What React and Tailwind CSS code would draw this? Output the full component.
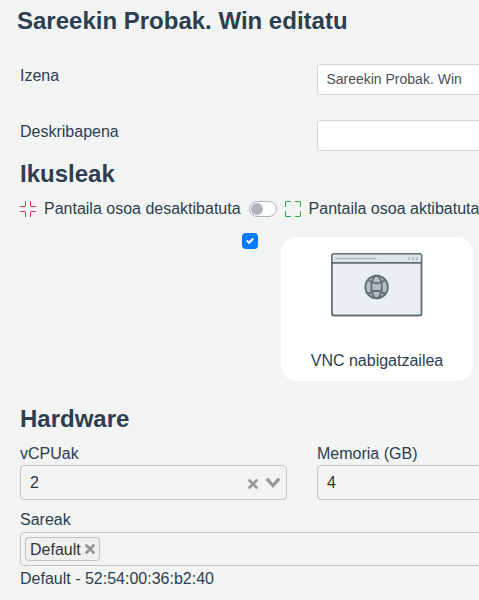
import { BsFullscreen, BsFullscreenExit } from "react-icons/bs";

function ClearIcon() {
  return (
    <svg width="10" height="10" viewBox="0 0 10 10" className="shrink-0 fill-[#3c3c3c]/50">
      <path d="M6.895455 5l2.842897-2.842898c.348864-.348863.348864-.914488 0-1.263636L9.106534.261648c-.348864-.348864-.914489-.348864-1.263636 0L5 3.104545 2.157102.261648c-.348863-.348864-.914488-.348864-1.263636 0L.261648.893466c-.348864.348864-.348864.914489 0 1.263636L3.104545 5 .261648 7.842898c-.348864.348863-.348864.914488 0 1.263636l.631818.631818c.348864.348864.914773.348864 1.263636 0L5 6.895455l2.842898 2.842897c.348863.348864.914772.348864 1.263636 0l.631818-.631818c.348864-.348864.348864-.914489 0-1.263636L6.895455 5z" />
    </svg>
  );
}

function OpenIcon() {
  return (
    <svg width="14" height="10" viewBox="0 0 14 10" className="shrink-0 fill-[#3c3c3c]/50">
      <path d="M9.211364 7.59931l4.48338-4.867229c.407008-.441854.407008-1.158247 0-1.60046l-.73712-.80023c-.407008-.441854-1.066904-.441854-1.474243 0L7 5.198617 2.51662.33139c-.407008-.441853-1.066904-.441853-1.474243 0l-.737121.80023c-.407008.441854-.407008 1.158248 0 1.600461l4.48338 4.867228L7 10l2.211364-2.40069z" />
    </svg>
  );
}

function BrowserIcon() {
  return (
    <svg width="92" height="64" viewBox="0 0 92 64" fill="none" stroke="#636e73">
      <rect x="0.9" y="0.9" width="89.6" height="61.6" rx="2" fill="#e9eff2" strokeWidth="1.8" />
      <path d="M1.8 1.8h87.8v7.6H1.8z" fill="#dde5e8" stroke="none" />
      <path d="M1 9.8h89.5" strokeWidth="1.8" />
      <path d="M4.5 5.5h41" stroke="#b1bbc0" strokeWidth="1.6" />
      <path d="M78.2 4v3M82.1 4v3M86 4v3" stroke="#b1bbc0" strokeWidth="1.7" />
      <g strokeWidth="1.8">
        <circle cx="45.6" cy="34" r="11.3" fill="#b1bdc3" />
        <ellipse cx="45.6" cy="34" rx="5.2" ry="11.3" />
        <path d="M37 27q8.6 6.5 17.2 0M37 41q8.6-6.5 17.2 0" />
      </g>
    </svg>
  );
}

function TextRow({ label, value }) {
  return (
    <label className="flex h-8">
      <span className="w-[297px] shrink-0">{label}</span>
      <input
        defaultValue={value}
        className="h-[31px] w-[267px] shrink-0 rounded-[3.2px] border border-[#ced4da] bg-white px-2 pb-px pl-[8.4px] text-sm leading-[21px] text-[#495057] outline-none"
      />
    </label>
  );
}

function SelectField({ label, value }) {
  return (
    <div className="w-[267px] shrink-0">
      <div>{label}</div>
      <div className="mt-[-1px] flex h-[35px] items-center rounded border border-[#3c3c3c]/26 pr-[6px] pl-[9px] text-[#333]">
        <span className="flex-1">{value}</span>
        <span className="mt-[3px] mr-2">
          <ClearIcon />
        </span>
        <OpenIcon />
      </div>
    </div>
  );
}

export default function App() {
  return (
    <div className="h-[600px] w-full overflow-hidden bg-[#f2f4f3] font-['Liberation_Sans',Arial,sans-serif] text-base whitespace-nowrap text-[#2c3e50]">
      <h1 className="pt-[6px] pl-[17px] text-2xl leading-[29px] font-bold">Sareekin Probak. Win editatu</h1>
      <div className="w-[584px] pt-[29px] pl-5">
        <div className="flex flex-col gap-6">
          <TextRow label="Izena" value="Sareekin Probak. Win" />
          <TextRow label="Deskribapena" value="" />
        </div>

        <h2 className="mt-[7px] text-2xl leading-[29px] font-bold">Ikusleak</h2>
        <div className="mt-[9px] flex items-center">
          <BsFullscreenExit className="size-4 text-[#dc3545]" />
          <span className="ml-2">Pantaila osoa desaktibatuta</span>
          <span className="ml-2 flex h-4 w-7 items-center rounded-full border border-[#adb5bd] bg-white pl-px">
            <span className="size-3 rounded-full bg-[#adb5bd]" />
          </span>
          <BsFullscreen className="ml-2 size-4 text-[#28a745]" />
          <span className="ml-2">Pantaila osoa aktibatuta</span>
        </div>

        <div className="mt-3 flex items-start pl-[222px]">
          <span className="flex size-4 items-center justify-center rounded bg-[#007bff]">
            <svg width="8" height="8" viewBox="0 0 8 8" fill="#fff">
              <path d="M6.564.75l-3.59 3.612-1.538-1.55L0 4.26l2.974 2.99L8 2.193z" />
            </svg>
          </span>
          <div className="mt-1 ml-[23px] flex h-36 w-48 flex-col items-center rounded-2xl bg-white pt-4">
            <BrowserIcon />
            <span className="mt-8">VNC nabigatzailea</span>
          </div>
        </div>

        <h2 className="mt-[23px] text-2xl leading-[29px] font-bold">Hardware</h2>
        <div className="mt-[9px] flex gap-[30px]">
          <SelectField label="vCPUak" value="2" />
          <SelectField label="Memoria (GB)" value="4" />
        </div>

        <div className="mt-2">
          <div>Sareak</div>
          <div className="flex h-[34px] items-center rounded border border-[#3c3c3c]/26 pl-1">
            <span className="flex h-6 items-center gap-1 rounded border border-[#3c3c3c]/26 bg-[#f0f0f0] px-1 text-[#333]">
              <span className="pt-0.5">Default</span>
              <ClearIcon />
            </span>
          </div>
          <div className="mt-px">Default - 52:54:00:36:b2:40</div>
        </div>
      </div>
    </div>
  );
}
